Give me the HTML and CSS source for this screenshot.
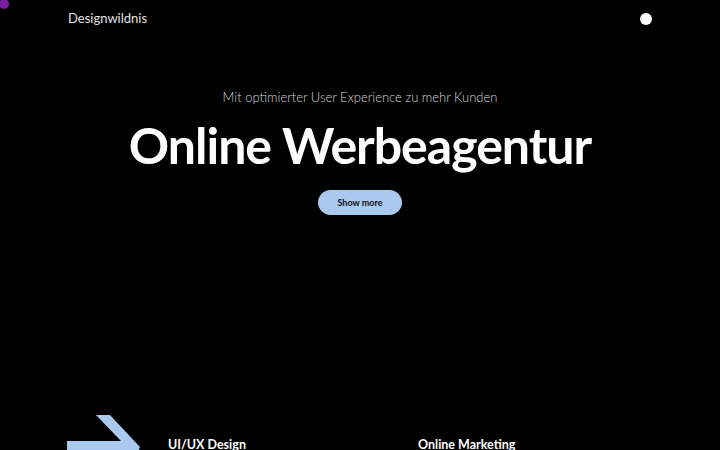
FILE: index.html
```html
<!DOCTYPE html>
<html lang="de">
<head>
<meta charset="utf-8">
<title>Designwildnis</title>
<link rel="stylesheet" href="styles.css">
</head>
<body>
<div class="cursor-dot"></div>
<header class="header">
  <a class="logo" href="#">Designwildnis</a>
  <button class="menu-dot" aria-label="Menü"></button>
</header>
<section class="hero">
  <p class="hero-sub">Mit optimierter User Experience zu mehr Kunden</p>
  <h1 class="hero-title">Online Werbeagentur</h1>
  <a class="btn" href="#">Show more</a>
</section>
<section class="services">
  <div class="arrow-col">
    <svg class="arrow" width="80" height="40" viewBox="0 0 80 40">
      <polygon points="29,0 43,0 73,32 70,40 0,40 0,26 54,26" fill="#a9c9ee"/>
    </svg>
  </div>
  <div class="service"><h2 class="service-title">UI/UX Design</h2></div>
  <div class="service"><h2 class="service-title">Online Marketing</h2></div>
</section>
</body>
</html>
```
FILE: styles.css
```css
html, body {
  margin: 0;
  padding: 0;
  background: #000;
  color: #fff;
  font-family: "Lato", "Open Sans", sans-serif;
  overflow: hidden;
  height: 450px;
}
.cursor-dot {
  position: absolute;
  left: -1px;
  top: -1px;
  width: 10px;
  height: 10px;
  border-radius: 50%;
  background: #7b1ea2;
}
.header {
  display: flex;
  justify-content: space-between;
  align-items: center;
  padding: 10px 68px 0 68px;
  height: 16px;
}
.logo {
  color: #e2e2e2;
  text-decoration: none;
  font-size: 13px;
  font-weight: 400;
}
.menu-dot {
  width: 12px;
  height: 12px;
  border: 0;
  padding: 0;
  border-radius: 50%;
  background: #fff;
  margin-top: 2px;
}
.hero {
  display: flex;
  flex-direction: column;
  align-items: center;
  padding-top: 63px;
}
.hero-sub {
  margin: 0;
  font-size: 13px;
  font-weight: 300;
  color: #d6d6d6;
  line-height: 16px;
}
.hero-title {
  margin: 10px 0 0 0;
  font-size: 50px;
  font-weight: 700;
  line-height: 60px;
  letter-spacing: -1px;
}
.btn {
  margin-top: 15px;
  display: inline-flex;
  align-items: center;
  justify-content: center;
  width: 84px;
  height: 25px;
  border-radius: 13px;
  background: #a9c9ee;
  color: #0d1420;
  text-decoration: none;
  font-size: 9px;
  font-weight: 700;
}
.services {
  display: flex;
  align-items: flex-start;
  padding: 197px 0 0 67px;
}
.arrow-col {
  width: 101px;
}
.arrow {
  display: block;
  margin-top: 3px;
}
.service {
  width: 250px;
  padding-top: 25px;
}
.service-title {
  margin: 0;
  font-size: 12.5px;
  font-weight: 700;
  line-height: 16px;
}
```
